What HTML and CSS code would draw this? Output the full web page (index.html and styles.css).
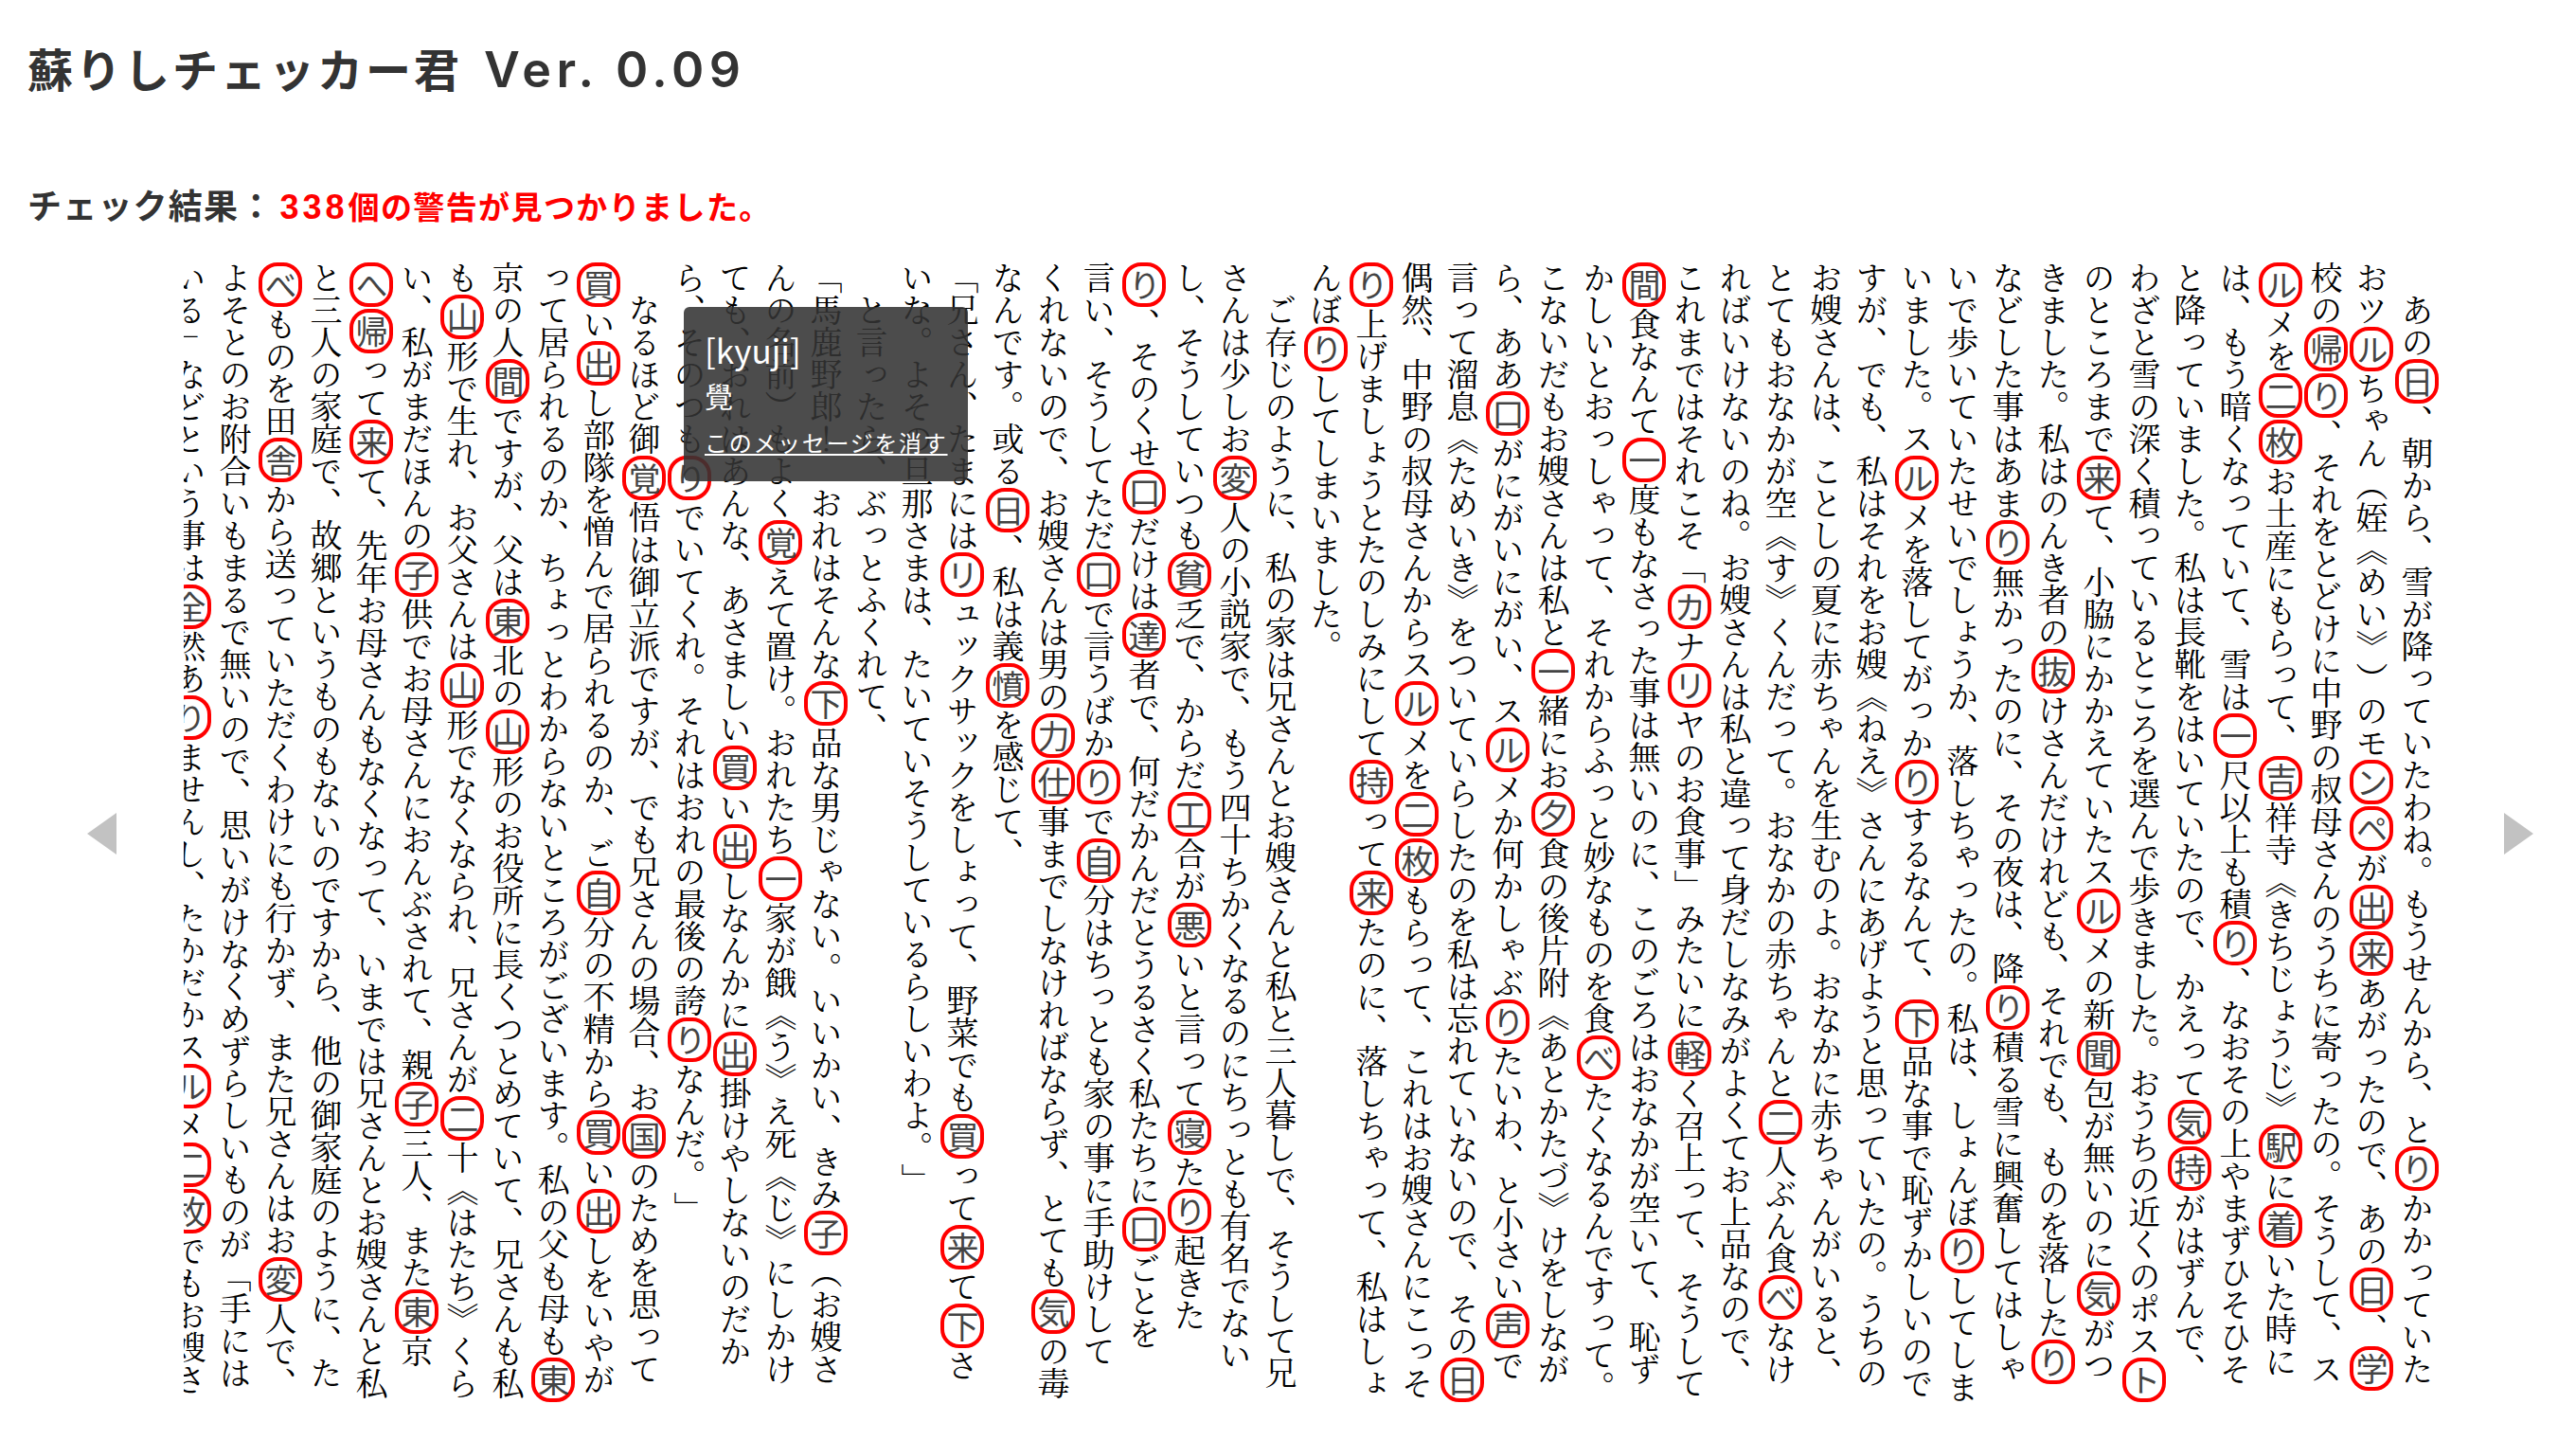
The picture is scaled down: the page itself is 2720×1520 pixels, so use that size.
FILE: index.html
```html
<!DOCTYPE html>
<html lang="ja">
<head>
<meta charset="utf-8">
<title>蘇りしチェッカー君</title>
<link rel="stylesheet" href="styles.css">
</head>
<body>
<header class="head">
<h1 class="title">蘇りしチェッカー君 <span class="ver">Ver. 0.09</span></h1>
<p class="result"><span class="label">チェック結果：</span><span class="count"><span class="num">338</span>個の警告が見つかりました。</span></p>
</header>
<main class="viewer">
<button class="nav nav-prev" aria-label="前へ"></button>
<div class="slider">
<div class="text">
　あの<mark>日</mark>、朝から、雪が降っていたわね。もうせんから、と<mark>り</mark>かかっていた<br>
おツ<mark>ル</mark>ちゃん（姪《めい》）のモ<mark>ン</mark><mark>ペ</mark>が<mark>出</mark><mark>来</mark>あがったので、あの<mark>日</mark>、<mark>学</mark><br>
校の<mark>帰</mark><mark>り</mark>、それをとどけに中野の叔母さんのうちに寄ったの。そうして、ス<br>
<mark>ル</mark>メを<mark>二</mark><mark>枚</mark>お土産にもらって、<mark>吉</mark>祥寺《きちじょうじ》<mark>駅</mark>に<mark>着</mark>いた時に<br>
は、もう暗くなっていて、雪は<mark>一</mark>尺以上も積<mark>り</mark>、なおその上やまずひそひそ<br>
と降っていました。私は長靴をはいていたので、かえって<mark>気</mark><mark>持</mark>がはずんで、<br>
わざと雪の深く積っているところを選んで歩きました。おうちの近くのポス<mark>ト</mark><br>
のところまで<mark>来</mark>て、小脇にかかえていたス<mark>ル</mark>メの新<mark>聞</mark>包が無いのに<mark>気</mark>がつ<br>
きました。私はのんき者の<mark>抜</mark>けさんだけれども、それでも、ものを落した<mark>り</mark><br>
などした事はあま<mark>り</mark>無かったのに、その夜は、降<mark>り</mark>積る雪に興奮してはしゃ<br>
いで歩いていたせいでしょうか、落しちゃったの。私は、しょんぼ<mark>り</mark>してしま<br>
いました。ス<mark>ル</mark>メを落してがっか<mark>り</mark>するなんて、<mark>下</mark>品な事で恥ずかしいので<br>
すが、でも、私はそれをお嫂《ねえ》さんにあげようと思っていたの。うちの<br>
お嫂さんは、ことしの夏に赤ちゃんを生むのよ。おなかに赤ちゃんがいると、<br>
とてもおなかが空《す》くんだって。おなかの赤ちゃんと<mark>二</mark>人ぶん食<mark>べ</mark>なけ<br>
ればいけないのね。お嫂さんは私と違って身だしなみがよくてお上品なので、<br>
これまではそれこそ「<mark>カ</mark>ナ<mark>リ</mark>ヤのお食事」みたいに<mark>軽</mark>く召上って、そうして<br>
<mark>間</mark>食なんて<mark>一</mark>度もなさった事は無いのに、このごろはおなかが空いて、恥ず<br>
かしいとおっしゃって、それからふっと妙なものを食<mark>べ</mark>たくなるんですって。<br>
こないだもお嫂さんは私と<mark>一</mark>緒にお<mark>夕</mark>食の後片附《あとかたづ》けをしなが<br>
ら、ああ<mark>口</mark>がにがいにがい、ス<mark>ル</mark>メか何かしゃぶ<mark>り</mark>たいわ、と小さい<mark>声</mark>で<br>
言って溜息《ためいき》をついていらしたのを私は忘れていないので、その<mark>日</mark><br>
偶然、中野の叔母さんからス<mark>ル</mark>メを<mark>二</mark><mark>枚</mark>もらって、これはお嫂さんにこっそ<br>
<mark>り</mark>上げましょうとたのしみにして<mark>持</mark>って<mark>来</mark>たのに、落しちゃって、私はしょ<br>
んぼ<mark>り</mark>してしまいました。<br>
　ご存じのように、私の家は兄さんとお嫂さんと私と三人暮しで、そうして兄<br>
さんは少しお<mark>変</mark>人の小説家で、もう四十ちかくなるのにちっとも有名でない<br>
し、そうしていつも<mark>貧</mark>乏で、からだ<mark>工</mark>合が<mark>悪</mark>いと言って<mark>寝</mark>た<mark>り</mark>起きた<br>
<mark>り</mark>、そのくせ<mark>口</mark>だけは<mark>達</mark>者で、何だかんだとうるさく私たちに<mark>口</mark>ごとを<br>
言い、そうしてただ<mark>口</mark>で言うばか<mark>り</mark>で<mark>自</mark>分はちっとも家の事に手助けして<br>
くれないので、お嫂さんは男の<mark>力</mark><mark>仕</mark>事までしなければならず、とても<mark>気</mark>の毒<br>
なんです。或る<mark>日</mark>、私は義<mark>憤</mark>を感じて、<br>
「兄さん、たまには<mark>リ</mark>ュックサックをしょって、野菜でも<mark>買</mark>って<mark>来</mark>て<mark>下</mark>さ<br>
いな。よその旦那さまは、たいていそうしているらしいわよ。」<br>
　と言ったら、ぶっとふくれて、<br>
「馬鹿野郎！　おれはそんな<mark>下</mark>品な男じゃない。いいかい、きみ<mark>子</mark>（お嫂さ<br>
んの名前）もよく<mark>覚</mark>えて置け。おれたち<mark>一</mark>家が餓《う》え死《じ》にしかけ<br>
ても、おれはあんな、あさましい<mark>買</mark>い<mark>出</mark>しなんかに<mark>出</mark>掛けやしないのだか<br>
ら、そのつも<mark>り</mark>でいてくれ。それはおれの最後の誇<mark>り</mark>なんだ。」<br>
　なるほど御<mark>覚</mark>悟は御立派ですが、でも兄さんの場合、お<mark>国</mark>のためを思って<br>
<mark>買</mark>い<mark>出</mark>し部隊を憎んで居られるのか、ご<mark>自</mark>分の不精から<mark>買</mark>い<mark>出</mark>しをいやが<br>
って居られるのか、ちょっとわからないところがございます。私の父も母も<mark>東</mark><br>
京の人<mark>間</mark>ですが、父は<mark>東</mark>北の<mark>山</mark>形のお役所に長くつとめていて、兄さんも私<br>
も<mark>山</mark>形で生れ、お父さんは<mark>山</mark>形でなくなられ、兄さんが<mark>二</mark>十《はたち》くら<br>
い、私がまだほんの<mark>子</mark>供でお母さんにおんぶされて、親<mark>子</mark>三人、また<mark>東</mark>京<br>
<mark>へ</mark><mark>帰</mark>って<mark>来</mark>て、先年お母さんもなくなって、いまでは兄さんとお嫂さんと私<br>
と三人の家庭で、故郷というものもないのですから、他の御家庭のように、た<br>
<mark>べ</mark>ものを田<mark>舎</mark>から送っていただくわけにも行かず、また兄さんはお<mark>変</mark>人で、<br>
よそとのお附合いもまるで無いので、思いがけなくめずらしいものが「手には<br>
いる」などという事は<mark>全</mark>然あ<mark>り</mark>ませんし、たかだかス<mark>ル</mark>メ<mark>二</mark><mark>枚</mark>でもお嫂さ
</div>
</div>
<button class="nav nav-next" aria-label="次へ"></button>
<aside class="tip">
<p class="tip-word">[kyuji]</p>
<p class="tip-kanji">覺</p>
<a class="tip-close" href="#">このメッセージを消す</a>
</aside>
</main>
</body>
</html>
```
FILE: styles.css
```css
html, body { margin: 0; padding: 0; background: #fff; }
body {
  width: 2720px;
  height: 1520px;
  overflow: hidden;
  font-family: "Noto Sans CJK JP", sans-serif;
  color: #333;
}
.head {
  box-sizing: border-box;
  height: 238px;
  padding: 38px 0 0 29px;
}
.title {
  margin: 0;
  height: 66px;
  font-size: 48px;
  line-height: 66px;
  letter-spacing: 3px;
  font-weight: 700;
  white-space: nowrap;
}
.ver {
  margin-left: 9px;
  font-family: Inter, "Liberation Sans", sans-serif;
  font-size: 52px;
  line-height: 66px;
  font-weight: 600;
  letter-spacing: 5.5px;
}
.result {
  margin: 0;
  height: 48px;
  padding-top: 87px;
  font-size: 33px;
  line-height: 48px;
  font-weight: 700;
  white-space: nowrap;
}
.label { font-size: 36px; letter-spacing: 1.2px; }
.count { color: #f00; letter-spacing: 1.4px; margin-left: 6px; }
.num {
  font-family: "Liberation Sans", sans-serif;
  font-size: 36px;
  letter-spacing: 4px;
}
.viewer {
  position: relative;
  display: flex;
  align-items: center;
  height: 1284px;
}
.nav {
  flex: none;
  width: 31px;
  height: 44px;
  padding: 0;
  border: 0;
  background: #c2c2c2;
}
.nav-prev { margin-left: 92px; margin-right: 71px; clip-path: polygon(100% 0, 100% 100%, 0 50%); }
.nav-next { margin-left: 68px; clip-path: polygon(0 0, 100% 50%, 0 100%); }
.slider {
  flex: none;
  align-self: stretch;
  box-sizing: border-box;
  width: 2382px;
  padding-top: 38px;
  overflow: hidden;
  display: flex;
  justify-content: flex-end;
}
.text {
  writing-mode: vertical-rl;
  text-spacing-trim: space-all;
  font-family: "Noto Serif CJK JP", "Noto Sans CJK JP", serif;
  font-size: 34px;
  line-height: 48px;
  color: #000;
  white-space: nowrap;
}
mark {
  display: inline-block;
  box-sizing: border-box;
  background: none;
  color: #444;
  font-family: "Noto Sans CJK JP", sans-serif;
  inline-size: 47px;
  block-size: 46px;
  margin-inline: 1px;
  line-height: 38px;
  text-align: center;
  border: 4px solid #f00;
  border-radius: 20px;
}
.tip {
  position: absolute;
  left: 722px;
  top: 86px;
  width: 300px;
  height: 184px;
  box-sizing: border-box;
  padding: 20px 15px 0 22px;
  background: rgba(51, 51, 51, 0.88);
  border-radius: 6px;
  color: #fff;
}
.tip p { margin: 0; }
.tip-word { font-size: 35px; line-height: 50px; }
.tip-kanji { font-size: 30px; line-height: 46px; }
.tip-close {
  display: inline-block;
  margin-top: 9px;
  font-size: 24px;
  line-height: 36px;
  letter-spacing: 1.7px;
  white-space: nowrap;
  color: #fff;
}
```
